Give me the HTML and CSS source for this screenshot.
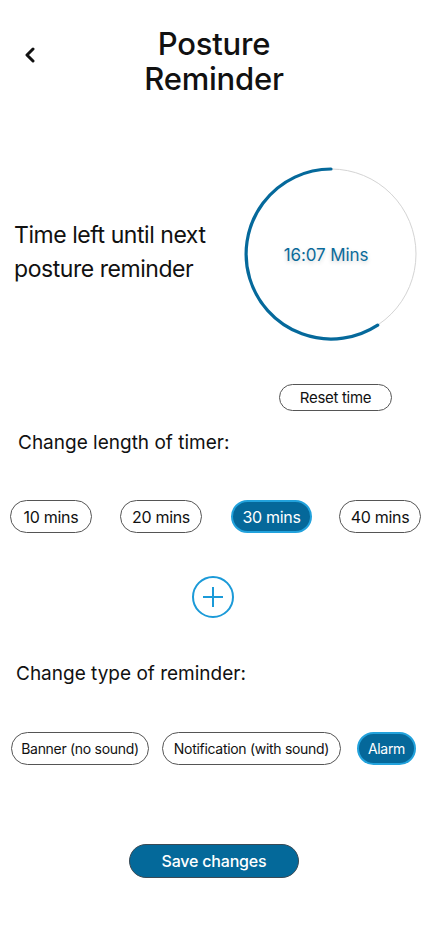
FILE: index.html
```html
<!DOCTYPE html>
<html>
<head>
<meta charset="utf-8">
<link rel="stylesheet" href="styles.css">
</head>
<body>
<div class="page">
  <header class="header">
    <button class="back" aria-label="Back">
      <svg width="14" height="16" viewBox="0 0 14 16"><path d="M10 2 L4 8 L10 14" fill="none" stroke="#111" stroke-width="3" stroke-linecap="round" stroke-linejoin="round"/></svg>
    </button>
    <h1 class="title">Posture<br>Reminder</h1>
  </header>

  <section class="timer">
    <p class="timer-label">Time left until next posture reminder</p>
    <div class="ring">
      <svg width="174" height="174" viewBox="0 0 174 174">
        <circle cx="87" cy="87" r="85" fill="none" stroke="#d4d4d4" stroke-width="1"/>
        <path d="M87 2 A85 85 0 1 0 133.7 158.1" fill="none" stroke="#05699b" stroke-width="3.2" stroke-linecap="round"/>
      </svg>
      <span class="ring-text">16:07 Mins</span>
    </div>
  </section>

  <div class="reset-row"><button class="pill reset">Reset time</button></div>

  <h2 class="section-title first">Change length of timer:</h2>
  <div class="options lengths">
    <button class="pill len">10 mins</button>
    <button class="pill len">20 mins</button>
    <button class="pill len active">30 mins</button>
    <button class="pill len">40 mins</button>
  </div>

  <div class="add-row">
    <button class="add" aria-label="Add">
      <svg width="44" height="44" viewBox="0 0 44 44"><circle cx="22" cy="22" r="20" fill="none" stroke="#1b9ad8" stroke-width="2"/><path d="M22 12 V32 M12 22 H32" stroke="#1b9ad8" stroke-width="2"/></svg>
    </button>
  </div>

  <h2 class="section-title second">Change type of reminder:</h2>
  <div class="options types">
    <button class="pill type">Banner (no sound)</button>
    <button class="pill type">Notification (with sound)</button>
    <button class="pill type active">Alarm</button>
  </div>

  <div class="save-row"><button class="save">Save changes</button></div>
</div>
</body>
</html>
```

FILE: styles.css
```css
* { box-sizing: border-box; }
html, body { margin: 0; padding: 0; background: #fff; }
body { font-family: Inter, "Noto Sans", sans-serif; color: #111; }
.page { width: 428px; height: 926px; overflow: hidden; }

button { font-family: inherit; cursor: pointer; }

.header {
  display: grid;
  grid-template-columns: 1fr auto 1fr;
  align-items: center;
  padding-top: 26px;
}
.back {
  grid-column: 1;
  grid-row: 1;
  justify-self: start;
  margin-left: 20px;
  margin-top: -12px;
  background: none;
  border: 0;
  padding: 0;
  width: 20px;
  height: 20px;
  display: flex;
  align-items: center;
  justify-content: center;
}
.title {
  grid-column: 2;
  grid-row: 1;
  margin: 0;
  font-size: 31px;
  line-height: 35px;
  font-weight: 500;
  text-align: center;
  letter-spacing: -0.2px;
}

.timer {
  display: flex;
  align-items: center;
  margin-top: 71px;
  padding-left: 14px;
}
.timer-label {
  margin: 0;
  width: 224px;
  font-size: 23px;
  line-height: 34px;
  letter-spacing: -0.45px;
  font-weight: 400;
  padding-bottom: 5px;
}
.ring {
  position: relative;
  width: 174px;
  height: 174px;
  margin-left: 6px;
}
.ring svg { display: block; }
.ring-text {
  position: absolute;
  inset: 0;
  padding-top: 2px;
  padding-right: 10px;
  display: flex;
  align-items: center;
  justify-content: center;
  color: #0a6a9a;
  font-size: 17px;
  letter-spacing: -0.1px;
  text-shadow: 0 2px 4px rgba(0,0,0,0.18);
}

.pill {
  background: #fff;
  border: 1px solid #555;
  border-radius: 20px;
  color: #111;
  padding: 0;
  font-weight: 400;
  letter-spacing: -0.3px;
}
.reset-row {
  display: flex;
  padding-left: 279px;
  margin-top: 43px;
}
.reset {
  width: 113px;
  height: 27px;
  font-size: 15px;
}

.section-title {
  margin: 0;
  font-size: 19px;
  font-weight: 400;
  letter-spacing: 0;
  line-height: 24px;
}
.section-title.first { margin-top: 20px; padding-left: 18px; }
.section-title.second { margin-top: 43px; padding-left: 16px; }

.options { display: flex; }
.lengths {
  margin-top: 45px;
  padding-left: 10px;
  gap: 0;
}
.len {
  height: 33px;
  width: 82px;
  font-size: 16px;
}
.len:nth-child(2) { margin-left: 28px; }
.len:nth-child(3) { margin-left: 29px; width: 81px; }
.len:nth-child(4) { margin-left: 27px; }

.pill.active {
  background: #05689a;
  border: 2px solid #22a2dc;
  color: #fff;
}

.add-row {
  display: flex;
  justify-content: center;
  margin-top: 42px;
  padding-right: 2px;
}
.add {
  background: none;
  border: 0;
  padding: 0;
  width: 44px;
  height: 44px;
}
.add svg { display: block; }

.types {
  margin-top: 46px;
  padding-left: 11px;
}
.type {
  height: 33px;
  font-size: 14px;
}
.type:nth-child(1) { width: 138px; }
.type:nth-child(2) { width: 179px; margin-left: 13px; }
.type:nth-child(3) { width: 59px; margin-left: 16px; }

.save-row {
  display: flex;
  padding-left: 129px;
  margin-top: 79px;
}
.save {
  width: 170px;
  height: 34px;
  border-radius: 17px;
  background: #04699a;
  border: 1px solid #3a4a55;
  color: #fff;
  font-size: 16px;
  font-weight: 500;
  letter-spacing: -0.2px;
}
```
